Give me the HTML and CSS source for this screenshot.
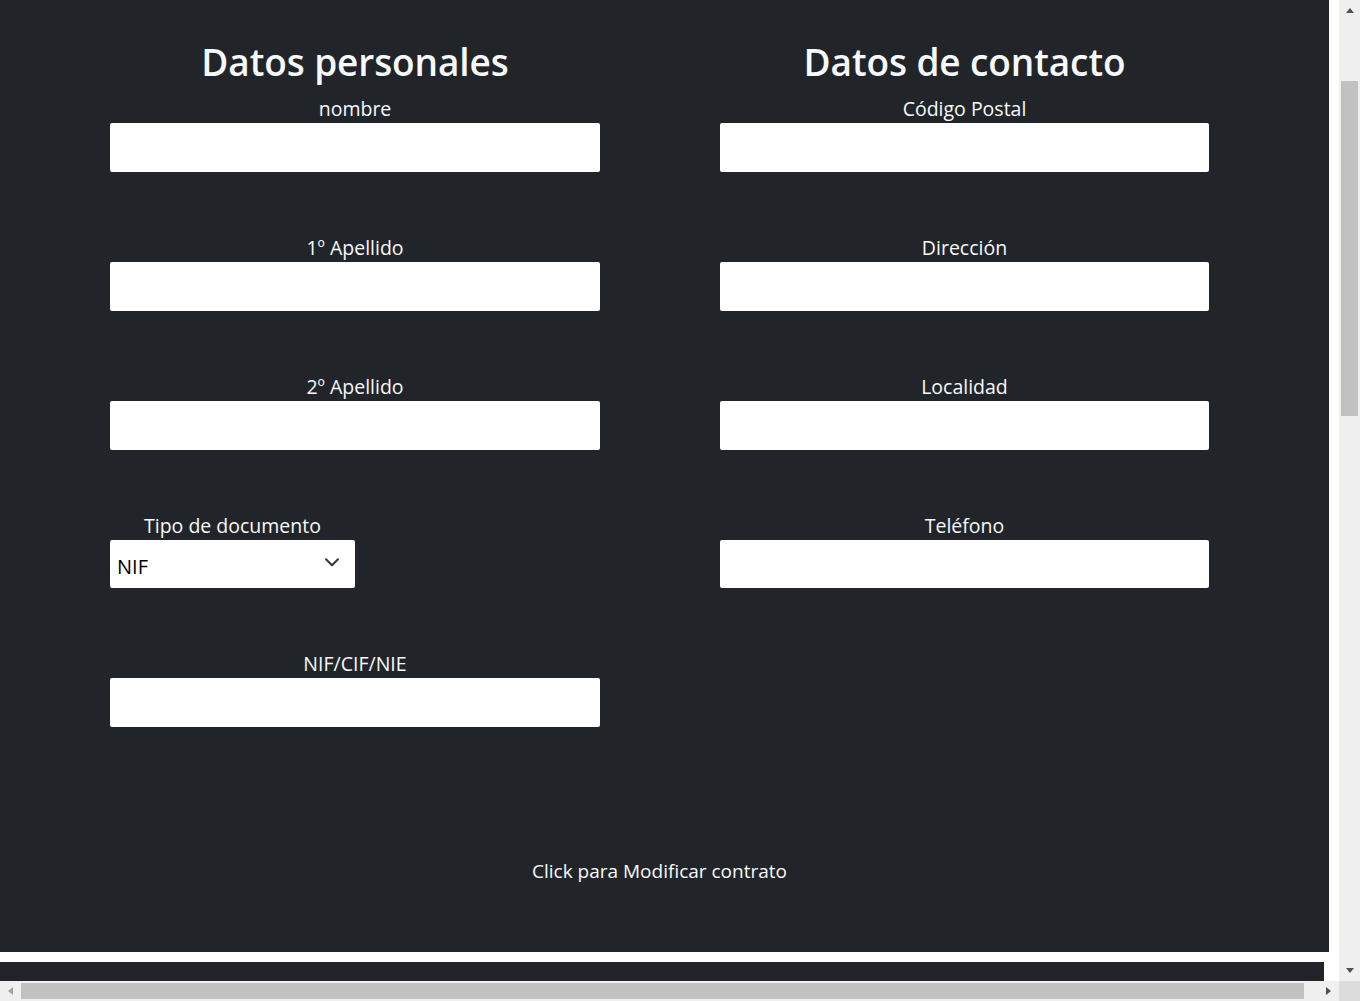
FILE: index.html
```html
<!DOCTYPE html>
<html lang="es">
<head>
<meta charset="utf-8">
<title>Datos</title>
<link rel="stylesheet" href="styles.css">
</head>
<body>
<div class="screen">
  <div class="viewport">
    <main class="page">
      <div class="columns">
        <section class="col">
          <h1 class="title">Datos personales</h1>
          <div class="field"><label class="label">nombre</label><div class="input"></div></div>
          <div class="field"><label class="label">1º Apellido</label><div class="input"></div></div>
          <div class="field"><label class="label">2º Apellido</label><div class="input"></div></div>
          <div class="field field-select"><label class="label">Tipo de documento</label>
            <div class="select"><span class="select-value">NIF</span>
              <svg class="chevron" width="14" height="9" viewBox="0 0 14 9"><path d="M1 1.2 L7 7.2 L13 1.2" fill="none" stroke="#343a40" stroke-width="2" stroke-linecap="round" stroke-linejoin="round"/></svg>
            </div>
          </div>
          <div class="field"><label class="label">NIF/CIF/NIE</label><div class="input"></div></div>
        </section>
        <section class="col">
          <h1 class="title">Datos de contacto</h1>
          <div class="field"><label class="label">Código Postal</label><div class="input"></div></div>
          <div class="field"><label class="label">Dirección</label><div class="input"></div></div>
          <div class="field"><label class="label">Localidad</label><div class="input"></div></div>
          <div class="field"><label class="label">Teléfono</label><div class="input input-short"></div></div>
        </section>
      </div>
      <p class="action">Click para Modificar contrato</p>
    </main>
    <div class="footer"></div>
  </div>
  <div class="vscroll">
    <div class="sb-btn"><span class="tri tri-up"></span></div>
    <div class="vtrack"><div class="vthumb"></div></div>
    <div class="sb-btn"><span class="tri tri-down"></span></div>
  </div>
  <div class="hscroll">
    <div class="sb-btn-h"><span class="tri tri-left"></span></div>
    <div class="htrack"><div class="hthumb"></div></div>
    <div class="sb-btn-h"><span class="tri tri-right"></span></div>
  </div>
  <div class="corner"></div>
</div>
</body>
</html>
```
FILE: styles.css
```css
* { box-sizing: border-box; }
html, body { margin: 0; padding: 0; overflow: hidden; }
body { font-family: "Open Sans", "Noto Sans", sans-serif; background: #ffffff; }

.screen {
  width: 1360px;
  height: 1001px;
  display: grid;
  grid-template-columns: 1339px 21px;
  grid-template-rows: 981px 20px;
}

.viewport { overflow: hidden; background: #ffffff; }

.page {
  width: 1329px;
  height: 952px;
  background: #212529;
  color: #f8f9fa;
  padding-top: 38px;
}

.columns {
  display: grid;
  grid-template-columns: 490px 489px;
  column-gap: 120px;
  padding-left: 110px;
}

.col { display: flex; flex-direction: column; }

.title {
  margin: 0 0 11px;
  font-size: 37px;
  font-weight: 600;
  line-height: 48px;
  text-align: center;
  letter-spacing: -0.1px;
}

.field { display: flex; flex-direction: column; margin-bottom: 64px; }
.field:last-child { margin-bottom: 0; }

.label {
  display: block;
  font-size: 19.5px;
  line-height: 24px;
  height: 24px;
  margin-bottom: 2px;
  text-align: center;
  white-space: nowrap;
}

.input {
  height: 49px;
  background: #ffffff;
  border-radius: 2px;
}
.input-short { height: 48px; }

.field-select { align-self: flex-start; width: 245px; }

.select {
  height: 48px;
  background: #ffffff;
  border-radius: 2px;
  display: flex;
  align-items: center;
  justify-content: space-between;
  padding: 6px 16px 0 7px;
  color: #000000;
  font-size: 20px;
}
.select-value { line-height: 24px; }
.chevron { display: block; margin-top: -9px; }

.action {
  margin: 132px 0 0;
  padding-right: 10px;
  text-align: center;
  font-size: 19px;
  line-height: 24px;
}

.footer {
  width: 1324px;
  height: 30px;
  margin-top: 10px;
  background: #212529;
}

/* scrollbars */
.vscroll {
  background: #f0f0f0;
  display: flex;
  flex-direction: column;
}
.sb-btn { height: 21px; display: flex; align-items: center; justify-content: center; }
.vtrack { flex: 1; padding: 60px 2px 0; }
.vthumb { height: 335px; background: #c1c1c1; }

.hscroll {
  background: #f0f0f0;
  display: flex;
  align-items: stretch;
}
.sb-btn-h { width: 21px; display: flex; align-items: center; justify-content: center; }
.htrack { flex: 1; padding: 2px 14px 2px 0; }
.hthumb { height: 100%; background: #c1c1c1; }

.corner { background: #dcdcdc; }

.tri { width: 0; height: 0; display: block; }
.tri-up { border-left: 4.5px solid transparent; border-right: 4.5px solid transparent; border-bottom: 5px solid #505050; }
.tri-down { border-left: 4.5px solid transparent; border-right: 4.5px solid transparent; border-top: 5px solid #505050; }
.tri-left { border-top: 4.5px solid transparent; border-bottom: 4.5px solid transparent; border-right: 5px solid #a3a3a3; }
.tri-right { border-top: 4.5px solid transparent; border-bottom: 4.5px solid transparent; border-left: 5px solid #505050; }
```
